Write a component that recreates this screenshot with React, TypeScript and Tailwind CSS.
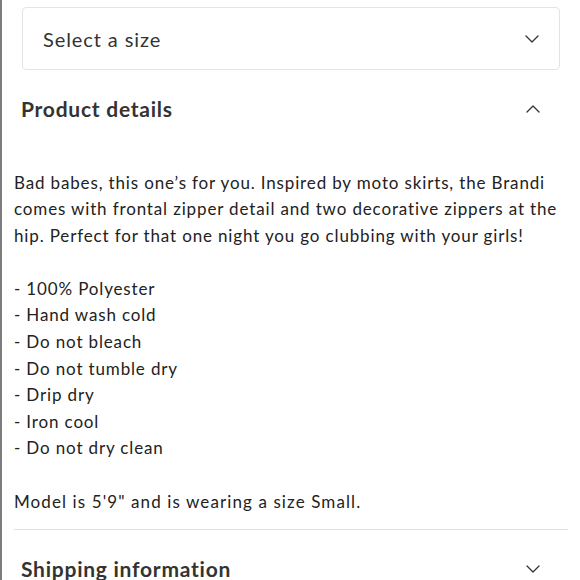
import React from "react";

const Chevron = ({ up = false }: { up?: boolean }) => (
  <svg width="14" height="8" viewBox="0 0 14 8" fill="none" className="shrink-0">
    <path
      d={up ? "M1 7L7 1L13 7" : "M1 1L7 7L13 1"}
      stroke="#333"
      strokeWidth="1.3"
      strokeLinecap="round"
      strokeLinejoin="round"
    />
  </svg>
);

const lines1 = [
  "Bad babes, this one\u2019s for you. Inspired by moto skirts, the Brandi",
  "comes with frontal zipper detail and two decorative zippers at the",
  "hip. Perfect for that one night you go clubbing with your girls!",
];
const care = [
  "- 100% Polyester",
  "- Hand wash cold",
  "- Do not bleach",
  "- Do not tumble dry",
  "- Drip dry",
  "- Iron cool",
  "- Do not dry clean",
];

export default function App() {
  return (
    <div
      className="h-[580px] w-[580px] overflow-hidden bg-white border-l-2 border-[#7d7d7d] text-[#222]"
      style={{ fontFamily: "Lato, 'Open Sans', sans-serif" }}
    >
      <div className="pt-[7px] pl-[20px] pr-[20px]">
        <div className="h-[63px] rounded-[4px] border border-[#e3e4e8] flex items-center justify-between pl-[20px] pr-[20px]">
          <span className="text-[20px] tracking-[0.9px] text-[#333]">Select a size</span>
          <Chevron />
        </div>
      </div>
      <div className="pl-[19px] pr-[40px] mt-[23px] flex items-center justify-between">
        <span className="text-[21px] font-bold text-[#333] tracking-[0.75px]">Product details</span>
        <Chevron up />
      </div>
      <div className="pl-[12px] mt-[45px] text-[17px] leading-[26.6px] whitespace-nowrap tracking-[0.85px]">
        {lines1.map((l) => (
          <div key={l}>{l}</div>
        ))}
        <div className="h-[26.6px]" />
        {care.map((l) => (
          <div key={l}>{l}</div>
        ))}
        <div className="h-[26.6px]" />
        <div className="tracking-[1.1px]">Model is 5'9" and is wearing a size Small.</div>
      </div>
      <div className="ml-[12px] mr-[12px] mt-[14px] border-t border-[#e2e2ea]" />
      <div className="pl-[19px] pr-[40px] mt-[23px] flex items-center justify-between">
        <span className="text-[21px] font-bold text-[#333] tracking-[0.75px]">Shipping information</span>
        <Chevron />
      </div>
    </div>
  );
}
